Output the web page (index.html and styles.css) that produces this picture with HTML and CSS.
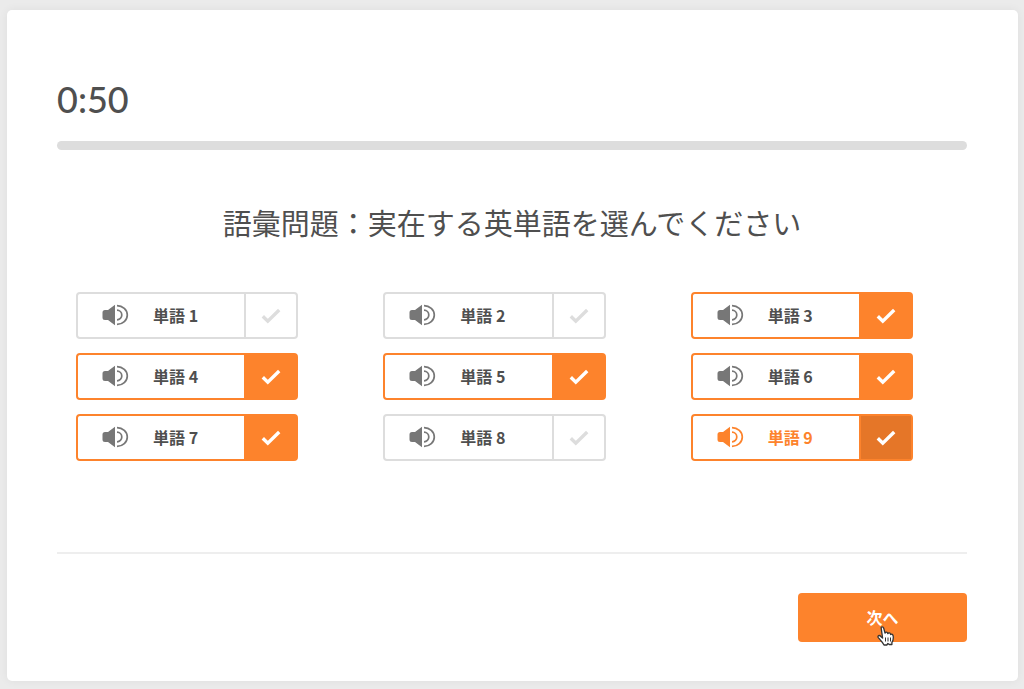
FILE: index.html
```html
<!DOCTYPE html>
<html lang="ja">
<head>
  <meta charset="UTF-8" />
  <meta name="viewport" content="width=device-width, initial-scale=1.0" />
  <title>語彙問題</title>
  <link rel="stylesheet" href="styles.css">
</head>
<body>

<!-- Shared icons -->
<svg class="sprite" aria-hidden="true">
  <symbol id="icon-speaker" viewBox="0 0 27 22">
    <path fill="currentColor" d="M3 6h3l7-5.3V21.300L6 16H3Q.5 16 .5 13.500V8.500Q.5 6 3 6z"/>
    <path fill="none" stroke="currentColor" stroke-width="1.700" d="M15 6.200a4.800 4.800 0 0 1 0 9.600M15 1.600a10.300 9.400 0 0 1 0 18.800"/>
  </symbol>
  <symbol id="icon-check" viewBox="0 0 20 16">
    <path fill="none" stroke="currentColor" stroke-width="3.400" d="M1.800 8.200l5 5L18.200 2"/>
  </symbol>
</svg>

<main class="card">
  <div class="timer">0:50</div>
  <div class="progress"></div>

  <h1 class="question">語彙問題：実在する英単語を選んでください</h1>

  <form class="quiz">
    <div class="words">
      <div class="word">
        <button type="button" class="word--play"><svg class="speaker"><use href="#icon-speaker"/></svg><span>単語 1</span></button>
        <label class="word--check"><input type="checkbox" aria-label="単語 1"><svg class="check"><use href="#icon-check"/></svg></label>
      </div>
      <div class="word">
        <button type="button" class="word--play"><svg class="speaker"><use href="#icon-speaker"/></svg><span>単語 2</span></button>
        <label class="word--check"><input type="checkbox" aria-label="単語 2"><svg class="check"><use href="#icon-check"/></svg></label>
      </div>
      <div class="word">
        <button type="button" class="word--play"><svg class="speaker"><use href="#icon-speaker"/></svg><span>単語 3</span></button>
        <label class="word--check"><input type="checkbox" aria-label="単語 3" checked><svg class="check"><use href="#icon-check"/></svg></label>
      </div>
      <div class="word">
        <button type="button" class="word--play"><svg class="speaker"><use href="#icon-speaker"/></svg><span>単語 4</span></button>
        <label class="word--check"><input type="checkbox" aria-label="単語 4" checked><svg class="check"><use href="#icon-check"/></svg></label>
      </div>
      <div class="word">
        <button type="button" class="word--play"><svg class="speaker"><use href="#icon-speaker"/></svg><span>単語 5</span></button>
        <label class="word--check"><input type="checkbox" aria-label="単語 5" checked><svg class="check"><use href="#icon-check"/></svg></label>
      </div>
      <div class="word">
        <button type="button" class="word--play"><svg class="speaker"><use href="#icon-speaker"/></svg><span>単語 6</span></button>
        <label class="word--check"><input type="checkbox" aria-label="単語 6" checked><svg class="check"><use href="#icon-check"/></svg></label>
      </div>
      <div class="word">
        <button type="button" class="word--play"><svg class="speaker"><use href="#icon-speaker"/></svg><span>単語 7</span></button>
        <label class="word--check"><input type="checkbox" aria-label="単語 7" checked><svg class="check"><use href="#icon-check"/></svg></label>
      </div>
      <div class="word">
        <button type="button" class="word--play"><svg class="speaker"><use href="#icon-speaker"/></svg><span>単語 8</span></button>
        <label class="word--check"><input type="checkbox" aria-label="単語 8"><svg class="check"><use href="#icon-check"/></svg></label>
      </div>
      <div class="word word--active">
        <button type="button" class="word--play"><svg class="speaker"><use href="#icon-speaker"/></svg><span>単語 9</span></button>
        <label class="word--check"><input type="checkbox" aria-label="単語 9" checked><svg class="check"><use href="#icon-check"/></svg></label>
      </div>
    </div>

    <div class="actions">
      <button type="submit" class="next">次へ
        <svg class="pointer" viewBox="0 0 18 20" aria-hidden="true">
          <path fill="#fff" stroke="#333" stroke-width="1.300" stroke-linejoin="round" d="M4.200 2.200Q4 .8 5.200.8 6.300.8 6.700 2.200L8 7.200Q8.400 5.900 9.600 6.200 10.600 6.400 10.800 7.600 11.400 6.500 12.500 6.900 13.400 7.200 13.600 8.500 14.300 7.800 15.300 8.400 16.300 9 16.300 11 16.400 14.500 14.900 16.500V18.500H12.200L10.900 17.500 9.800 19H7Q5.500 16.200 3.500 14.200L1.300 11.600Q.6 10.300 1.500 9.700 2.700 9.100 4 10.700L5.600 12z"/>
          <path stroke="#333" d="M8.500 11.500v4M11 11.500v4M13.500 11.500v4"/>
        </svg>
      </button>
    </div>
  </form>
</main>

</body>
</html>
```
FILE: styles.css
```css
* {
  box-sizing: border-box;
}

body {
  margin: 0;
  padding: 10px 6px 8px 7px;
  font-family: Lato, "Noto Sans CJK JP", sans-serif;
  background-color: #ebebeb;
  color: #4f4f4f;
}

button {
  font-family: inherit;
  border: none;
  cursor: pointer;
}

.sprite {
  display: none;
}

.card {
  padding: 65px 51px 39px 50px;
  background-color: #fff;
  border-radius: 5px;
  box-shadow: 0 0 10px rgba(0, 0, 0, 0.06);
}

.timer {
  font-size: 36px;
  font-weight: 500;
  line-height: 48px;
}

.progress {
  height: 9px;
  margin-top: 18px;
  border-radius: 5px;
  background-color: #ddd;
}

.question {
  margin: 50px 0 44px;
  font-size: 29px;
  font-weight: 400;
  line-height: 48px;
  text-align: center;
}

.words {
  display: grid;
  grid-template-columns: repeat(3, 1fr);
  gap: 14px 85px;
  padding: 0 54px 0 19px;
}

.word {
  display: flex;
  height: 47px;
  border: 2px solid #ddd;
  border-radius: 4px;
}

.word:has(input:checked) {
  border-color: #fd832c;
}

.word--play {
  display: flex;
  flex: 1;
  align-items: center;
  gap: 24px;
  padding: 0 0 1px 24px;
  border-radius: 4px;
  background-color: #fff;
  color: #4f4f4f;
  font-family: "Noto Sans CJK JP", sans-serif;
  font-size: 16px;
  font-weight: 700;
}

.speaker {
  width: 27px;
  height: 22px;
  color: #777;
}

.word--active .word--play,
.word--active .speaker {
  color: #fd832c;
}

.word--check {
  display: grid;
  place-items: center;
  width: 52px;
  border-left: 2px solid #ddd;
  color: #ddd;
  cursor: pointer;
}

.word--check input,
.word--check .check {
  grid-area: 1 / 1;
}

.word--check input {
  width: 100%;
  height: 100%;
  margin: 0;
  appearance: none;
  cursor: pointer;
}

.check {
  width: 20px;
  height: 16px;
  pointer-events: none;
}

.word--check:has(input:checked) {
  border-color: #fd832c;
  background-color: #fd832c;
  color: #fff;
}

.word--active .word--check:has(input:checked) {
  background-color: #e57628;
}

.actions {
  display: flex;
  justify-content: flex-end;
  margin-top: 91px;
  padding-top: 39px;
  border-top: 2px solid #eee;
}

.next {
  position: relative;
  width: 169px;
  height: 49px;
  padding: 0 0 2px;
  border-radius: 4px;
  background-color: #fd832c;
  color: #fff;
  font-family: "Noto Sans CJK JP", sans-serif;
  font-size: 16px;
  font-weight: 700;
}

/* hand pointer over the button */
.pointer {
  position: absolute;
  top: 33px;
  left: 79px;
  width: 18px;
  height: 20px;
}
```
